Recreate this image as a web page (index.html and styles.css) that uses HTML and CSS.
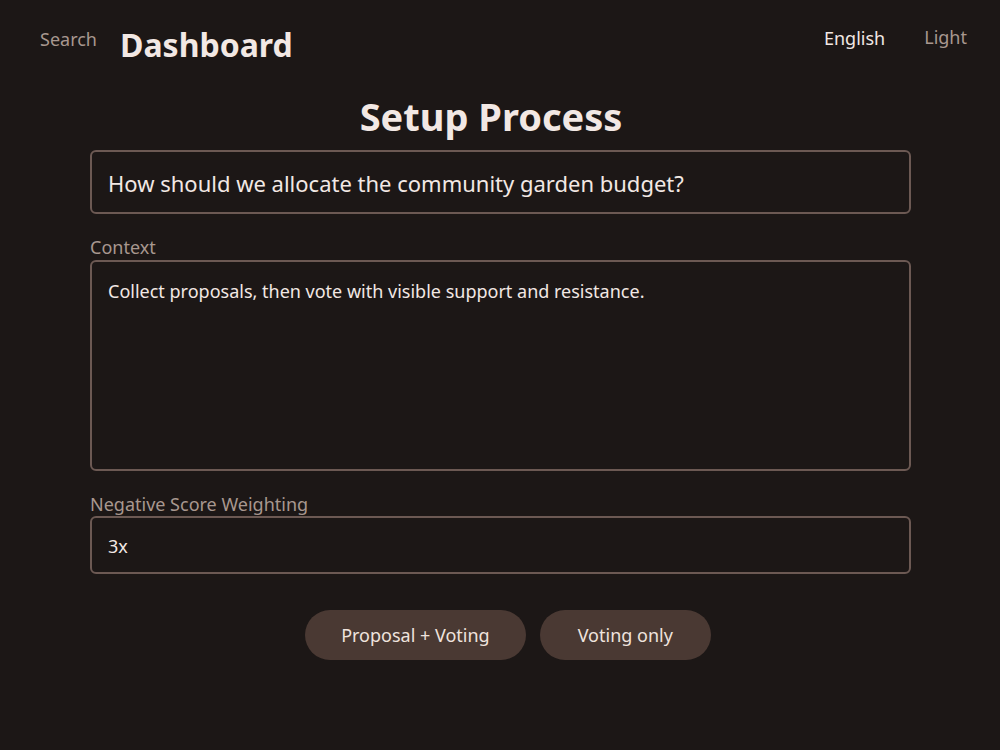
FILE: index.html
```html
<!DOCTYPE html>
<html lang="en">
<head>
<meta charset="utf-8">
<title>Setup Process</title>
<link rel="stylesheet" href="styles.css">
</head>
<body>
<header class="topbar">
  <a class="nav-search">Search</a>
  <a class="brand">Dashboard</a>
  <div class="spacer"></div>
  <a class="lang">English</a>
  <a class="theme">Light</a>
</header>
<main class="setup">
  <h1 class="title">Setup Process</h1>
  <div class="field field-question">How should we allocate the community garden budget?</div>
  <label class="label label-context">Context</label>
  <div class="field field-context">Collect proposals, then vote with visible support and resistance.</div>
  <label class="label label-weight">Negative Score Weighting</label>
  <div class="field field-weight">3x</div>
  <div class="actions">
    <button class="btn btn-full">Proposal + Voting</button>
    <button class="btn btn-vote">Voting only</button>
  </div>
</main>
</body>
</html>
```
FILE: styles.css
```css
html, body {
  margin: 0;
  padding: 0;
  background: #1c1716;
  color: #f2e8e4;
  font-family: "Noto Sans", "Open Sans", sans-serif;
}
body {
  width: 1000px;
  height: 750px;
  overflow: hidden;
}
.topbar {
  display: flex;
  align-items: flex-start;
  padding: 0 33px 0 40px;
  height: 80px;
}
.nav-search {
  font-size: 18px;
  line-height: 24px;
  color: #a8978f;
  margin-top: 27px;
}
.brand {
  font-size: 32px;
  font-weight: 700;
  line-height: 44px;
  margin-top: 23px;
  margin-left: 23px;
  color: #f2e8e4;
}
.spacer { flex: 1; }
.lang {
  font-size: 18px;
  line-height: 25px;
  margin-top: 26px;
  color: #f2e8e4;
}
.theme {
  font-size: 18px;
  line-height: 25px;
  margin-top: 25px;
  margin-left: 39px;
  color: #a8978f;
}
.setup {
  display: flex;
  flex-direction: column;
  padding: 0 89px 0 90px;
}
.title {
  margin: 10px 0 8px;
  padding-right: 19px;
  text-align: center;
  font-size: 38px;
  font-weight: 700;
  line-height: 52px;
}
.field {
  border: 2px solid #6c5953;
  border-radius: 6px;
  padding: 0 16px;
  color: #f2e8e4;
}
.field-question {
  font-size: 22px;
  line-height: 30px;
  padding-top: 16px;
  padding-bottom: 14px;
}
.field-context {
  font-size: 18px;
  line-height: 24px;
  padding-top: 17px;
  height: 190px;
}
.field-weight {
  font-size: 18px;
  line-height: 24px;
  padding-top: 16px;
  padding-bottom: 14px;
}
.label {
  font-size: 18px;
  line-height: 24px;
  color: #a8978f;
}
.label-context { margin: 21px 0 1px; }
.label-weight { margin: 21px 0 0; }
.actions {
  display: flex;
  justify-content: center;
  gap: 14px;
  margin-top: 36px;
  padding-left: 15px;
}
.btn {
  font-family: inherit;
  font-size: 18px;
  height: 50px;
  padding: 0 36px;
  border: none;
  border-radius: 25px;
  background: #4a3933;
  color: #efe3de;
}
.btn-vote {
  padding: 0 38px;
}
```
